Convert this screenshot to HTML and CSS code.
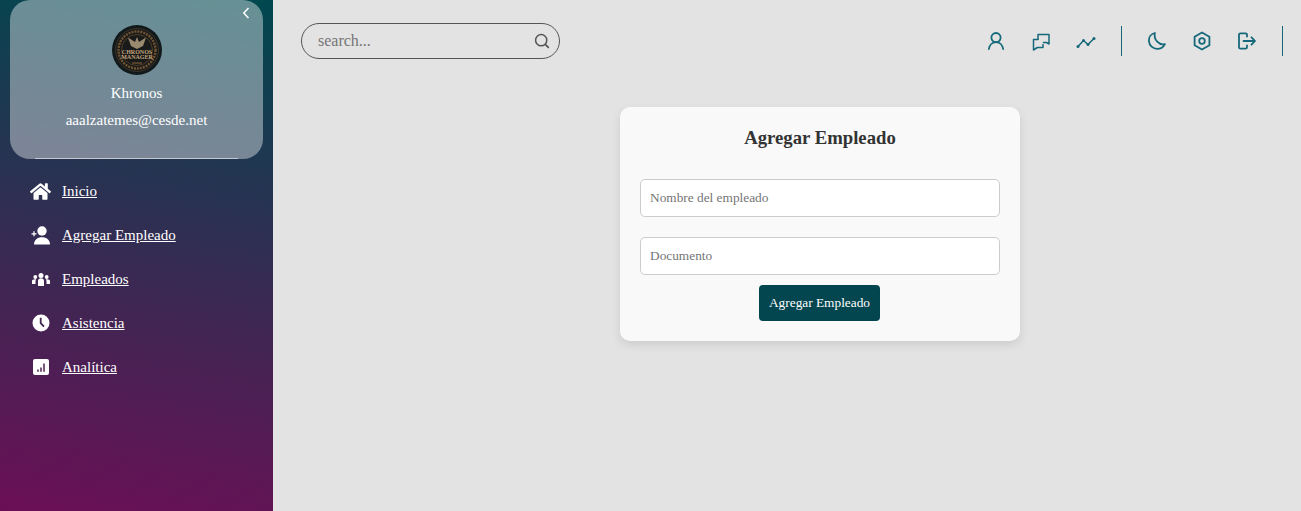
FILE: index.html
```html
<!DOCTYPE html>
<html lang="es">
<head>
<meta charset="utf-8">
<title>Agregar Empleado</title>
<link rel="stylesheet" href="styles.css">
</head>
<body>
<div class="app">
  <aside class="sidebar">
    <section class="profile">
      <svg class="collapse" viewBox="0 0 10 14" width="10" height="14"><path d="M7.500 2 2.800 7l4.700 5" fill="none" stroke="#fff" stroke-width="1.500"/></svg>
      <svg class="logo" viewBox="0 0 50 50" width="50" height="50">
        <circle cx="25" cy="25" r="25" fill="#11191b"/>
        <circle cx="25" cy="25" r="21.500" fill="#1b1b1a" stroke="#3a3226" stroke-width="1"/>
        <circle cx="25" cy="25" r="18.500" fill="none" stroke="#705533" stroke-width="2.400" stroke-dasharray="2 1"/>
        <circle cx="25" cy="25" r="15.500" fill="#191a1a" stroke="#5d472c" stroke-width="0.800"/>
        <path d="M16 12.500 23 17l2-5 2 5 7-4.500-3 8.500-6 3-6-3z" fill="#9a8a70"/>
        <text x="25" y="28.500" class="logo-text">CHRONOS</text>
        <text x="25" y="34" class="logo-text">MANAGER</text>
        <path d="M20 38h10" stroke="#7a5c38" stroke-width="1.200"/>
      </svg>
      <p class="user-name">Khronos</p>
      <p class="user-mail">aaalzatemes@cesde.net</p>
      <div class="rule"></div>
    </section>
    <nav class="menu">
      <a class="menu-item" href="#">
        <span class="menu-icon"><svg viewBox="0 0 576 512" width="21" height="19"><path fill="#fff" d="M280.37 148.26L96 300.11V464a16 16 0 0 0 16 16l112.06-.29a16 16 0 0 0 15.92-16V368a16 16 0 0 1 16-16h64a16 16 0 0 1 16 16v95.64a16 16 0 0 0 16 16.05L464 480a16 16 0 0 0 16-16V300L295.67 148.26a12.19 12.19 0 0 0-15.3 0zM571.6 251.47L488 182.56V44.05a12 12 0 0 0-12-12h-56a12 12 0 0 0-12 12v72.61L318.47 43a48 48 0 0 0-61 0L4.34 251.47a12 12 0 0 0-1.6 16.9l25.5 31A12 12 0 0 0 45.15 301l235.22-193.74a12.19 12.19 0 0 1 15.3 0L530.9 301a12 12 0 0 0 16.9-1.6l25.5-31a12 12 0 0 0-1.7-16.93z"/></svg></span>
        <span>Inicio</span>
      </a>
      <a class="menu-item" href="#">
        <span class="menu-icon"><svg viewBox="0 0 20 19" width="20" height="19"><circle cx="11" cy="5" r="4.700" fill="#fff"/><path fill="#fff" d="M3 18.500c0-4.600 3.400-7.300 8-7.300s8 2.700 8 7.300z"/><path d="M0.500 7.800h5M3 5.300v5" stroke="#fff" stroke-width="1.300"/></svg></span>
        <span>Agregar Empleado</span>
      </a>
      <a class="menu-item" href="#">
        <span class="menu-icon"><svg viewBox="0 0 18 13" width="18" height="13"><g fill="#fff"><circle cx="9" cy="2.500" r="2.500"/><path d="M6 13V8c0-1.700 1.200-2.800 3-2.800s3 1.100 3 2.800v5z"/><circle cx="3.300" cy="4" r="1.900"/><path d="M0 11V8c0-1 1.200-1.800 3-1.800.5 0 .8.100 1.200.2-.4.500-.7 1.100-.7 1.800v2.800z"/><circle cx="14.700" cy="4" r="1.900"/><path d="M18 11V8c0-1-1.200-1.800-3-1.800-.5 0-.8.100-1.200.2.400.5.700 1.100.7 1.800v2.800z"/></g></svg></span>
        <span>Empleados</span>
      </a>
      <a class="menu-item" href="#">
        <span class="menu-icon"><svg viewBox="0 0 18 18" width="18" height="18"><circle cx="9" cy="9" r="8.500" fill="#fff"/><path d="M8.700 3.800v5.400l3.300 3.400" fill="none" stroke="#3f2750" stroke-width="1.800"/></svg></span>
        <span>Asistencia</span>
      </a>
      <a class="menu-item" href="#">
        <span class="menu-icon"><svg viewBox="0 0 16 16" width="16" height="16"><rect width="16" height="16" rx="2" fill="#fff"/><path d="M5 10.500v2.200M8 8.500v4.200M11 4.500v8.200" stroke="#4f2050" stroke-width="1.500"/></svg></span>
        <span>Analítica</span>
      </a>
    </nav>
  </aside>

  <main class="content">
    <header class="topbar">
      <label class="search">
        <input class="search-input" type="text" placeholder="search...">
        <svg viewBox="0 0 16 16" width="16" height="16"><circle cx="7.200" cy="7.200" r="5.600" fill="none" stroke="#555" stroke-width="1.500"/><path d="m11.300 11.300 3.500 3.500" stroke="#555" stroke-width="1.700"/></svg>
      </label>
      <div class="tools">
        <svg class="tool" viewBox="0 0 20 20"><circle cx="10" cy="6.600" r="4.600"/><path d="M2.900 18c.5-4 3.400-6.800 7.100-6.800s6.600 2.800 7.100 6.800"/></svg>
        <svg class="tool thin" viewBox="0 0 20 20"><path d="M7 8V3.500h11v9.500l-2.500-1.500H12.500"/><path d="M7 8.500H2.500V19l3.800-2.500h5.700v-3"/></svg>
        <svg class="tool thin" viewBox="0 0 20 20"><path d="M2 15.500 7.500 9.500l4.500 4 6-6"/><g class="dots"><circle cx="2" cy="15.500" r="1.500"/><circle cx="7.500" cy="9.500" r="1.500"/><circle cx="12" cy="13.500" r="1.500"/><circle cx="18" cy="7.500" r="1.500"/></g></svg>
        <span class="divider"></span>
        <svg class="tool" viewBox="0 0 20 20"><path d="M7.800 2C3.900 3 1.500 6.300 1.900 10.200c.4 4.400 4 7.600 8.300 7.600 3.600 0 6.300-1.800 7.700-4.700-5.600 1.500-11.500-4.300-10.100-11.100z"/></svg>
        <svg class="tool" viewBox="0 0 20 20"><path d="M10 1.500 17.400 5.800V14.200L10 18.500 2.600 14.200V5.800z"/><circle cx="10" cy="10" r="2.800"/></svg>
        <svg class="tool" viewBox="0 0 20 20"><path d="M10 5.500V3.800a1.500 1.500 0 0 0-1.500-1.500H3.500A1.500 1.500 0 0 0 2 3.800v12.400a1.500 1.500 0 0 0 1.500 1.500h5a1.500 1.500 0 0 0 1.500-1.500v-1.700"/><path d="M6.500 10H18M14.500 6.300 18 10l-3.500 3.700"/></svg>
        <span class="divider"></span>
      </div>
    </header>

    <form class="card">
      <h2 class="card-title">Agregar Empleado</h2>
      <input class="field" type="text" placeholder="Nombre del empleado">
      <input class="field" type="text" placeholder="Documento">
      <button class="submit" type="button">Agregar Empleado</button>
    </form>
  </main>
</div>
</body>
</html>
```

FILE: styles.css
```css
* { box-sizing: border-box; }

html, body {
  margin: 0;
  height: 100%;
  overflow: hidden;
}

body {
  font-family: "Liberation Serif", "Times New Roman", serif;
  background: #e3e3e3;
}

.app {
  display: flex;
  height: 511px;
}

.sidebar {
  flex: 0 0 273px;
  background: linear-gradient(190deg, #00484f 0%, #6b0f56 100%);
  color: #fff;
}

.profile {
  position: relative;
  display: flex;
  flex-direction: column;
  align-items: center;
  width: 253px;
  height: 159px;
  margin-left: 10px;
  padding-top: 25px;
  border-radius: 20px;
  background: rgba(255, 255, 255, 0.4);
}

.collapse {
  position: absolute;
  top: 6px;
  right: 12px;
}

.logo { display: block; }

.logo-text {
  font-family: "Liberation Serif", serif;
  font-size: 6px;
  font-weight: 700;
  fill: #c4a57c;
  text-anchor: middle;
}

.user-name {
  margin: 10px 0 0;
  font-size: 15px;
  line-height: 17px;
}

.user-mail {
  margin: 10px 0 0;
  font-size: 15px;
  line-height: 17px;
}

.rule {
  position: absolute;
  left: 25px;
  right: 25px;
  bottom: 0;
  height: 1px;
  background: rgba(255, 255, 255, 0.55);
}

.menu {
  display: flex;
  flex-direction: column;
  gap: 20px;
  padding: 20px 0 0 30px;
}

.menu-item {
  display: flex;
  align-items: center;
  gap: 11px;
  height: 24px;
  color: #fff;
  font-size: 15px;
  text-decoration: underline;
}

.menu-icon {
  display: flex;
  justify-content: center;
  align-items: center;
  width: 21px;
}

.content {
  flex: 1;
  min-width: 0;
}

.topbar {
  display: flex;
  justify-content: space-between;
  align-items: center;
  height: 36px;
  margin-top: 23px;
  padding: 0 18px 0 28px;
}

.search {
  display: flex;
  align-items: center;
  width: 259px;
  height: 36px;
  padding: 0 9px 0 16px;
  border: 1px solid #555;
  border-radius: 18px;
}

.search-input {
  flex: 1;
  min-width: 0;
  border: 0;
  outline: 0;
  background: transparent;
  font: 16px "Liberation Serif", serif;
  padding: 0;
}

.search-input::placeholder { color: #757575; }

.tools {
  display: flex;
  align-items: center;
  gap: 25px;
}

.tool {
  width: 20px;
  height: 20px;
  fill: none;
  stroke: #16697a;
  stroke-width: 1.8;
  stroke-linecap: round;
  stroke-linejoin: round;
}

.tool.thin { stroke-width: 1.5; }

.tool .dots { fill: #16697a; stroke: none; }

.divider {
  width: 1px;
  height: 30px;
  background: #16697a;
}

.card {
  display: flex;
  flex-direction: column;
  align-items: center;
  width: 400px;
  height: 234px;
  margin: 48px 0 0 347px;
  padding: 20px;
  border-radius: 10px;
  background: #f9f9f9;
  box-shadow: 0 4px 10px rgba(0, 0, 0, 0.1);
}

.card-title {
  margin: 0 0 30px;
  font-size: 18.72px;
  line-height: 22px;
  color: #333;
}

.field {
  width: 100%;
  height: 38px;
  margin-bottom: 20px;
  padding: 0 9px;
  border: 1px solid #ccc;
  border-radius: 5px;
  background: #fff;
  font: 13.33px "Liberation Serif", serif;
}

.field::placeholder { color: #757575; }

.field + .field { margin-bottom: 10px; }

.submit {
  width: 121px;
  height: 36px;
  margin-right: 1px;
  padding: 0;
  border: 0;
  border-radius: 4px;
  background: #04464f;
  color: #fff;
  font: 13.33px "Liberation Serif", serif;
}
```
